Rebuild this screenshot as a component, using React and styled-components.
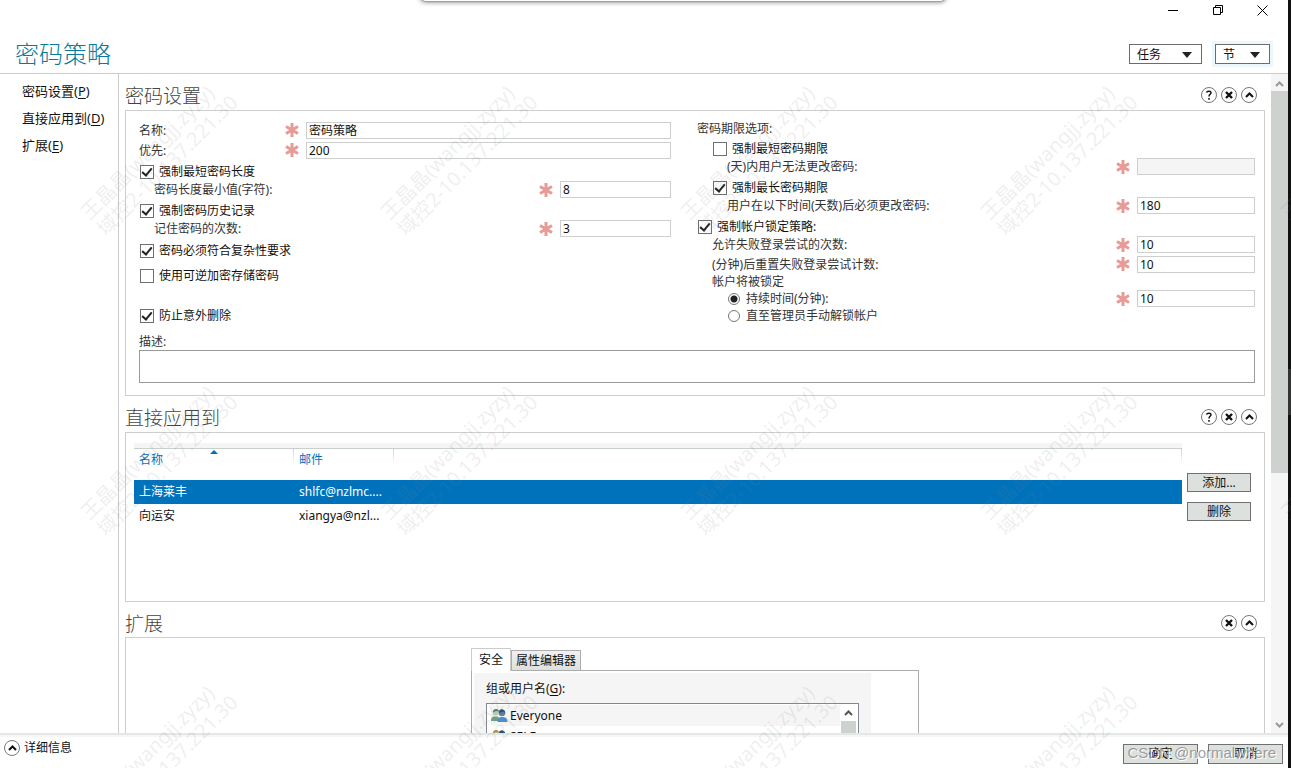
import React, { useState } from "react";
import styled, { createGlobalStyle } from "styled-components";

const watermarks = [];
for (let row = 0; row < 3; row++) {
  for (let col = 0; col < 5; col++) {
    watermarks.push({ left: 159 + col * 300, top: 157 + row * 300 });
  }
}

const members = [
  { name: "上海莱丰", mail: "shlfc@nzlmc...." },
  { name: "向运安", mail: "xiangya@nzl..." },
];

function Star() {
  return (
    <StarIcon viewBox="0 0 14 14" aria-hidden="true">
      <path d="M7 0V14M1 3.5L13 10.5M13 3.5L1 10.5" />
    </StarIcon>
  );
}

function Chevron({ down }) {
  return (
    <svg width="9" height="6" viewBox="0 0 9 6" aria-hidden="true">
      <path
        d={down ? "M1 1L4.500 4.500L8 1" : "M1 5L4.500 1.500L8 5"}
        fill="none"
        stroke="currentColor"
        strokeWidth="2"
      />
    </svg>
  );
}

function Field({ id, label, indent, width, wide, tall, ...rest }) {
  return (
    <Row $h={tall ? 20 : 18} $indent={indent}>
      <Label htmlFor={id} $tall={tall}>
        {label}
      </Label>
      <Star />
      <TextInput id={id} $width={width} $wide={wide} $tall={tall} {...rest} />
    </Row>
  );
}

function Check({ children, checked, indent, tall, gap }) {
  return (
    <CheckRow $indent={indent} $tall={tall} $gap={gap}>
      <Box type="checkbox" defaultChecked={checked} />
      {children}
    </CheckRow>
  );
}

function SectionHead({ title, help }) {
  return (
    <Head $h={help ? 36 : 35}>
      <h2>{title}</h2>
      <Tools>
        {help && (
          <RoundButton aria-label="帮助">
            <svg width="8" height="10" viewBox="0 0 8 10">
              <path
                d="M1.500 2.500C2 .8 6.300 .5 6 3C5.800 4.300 4 4.500 4 6.500M4 8V9.800"
                fill="none"
                stroke="#111"
                strokeWidth="1.500"
              />
            </svg>
          </RoundButton>
        )}
        <RoundButton aria-label="关闭">
          <svg width="8" height="8" viewBox="0 0 8 8">
            <path d="M1 1L7 7M7 1L1 7" stroke="#111" strokeWidth="2.400" />
          </svg>
        </RoundButton>
        <RoundButton aria-label="折叠">
          <Chevron />
        </RoundButton>
      </Tools>
    </Head>
  );
}

function People({ left, right, hair }) {
  return (
    <svg width="17" height="15" viewBox="0 0 17 15" aria-hidden="true">
      <path d="M0 13C0 9 2 8.500 4 8.500H7L10 13Z" fill={left} />
      <circle cx="5" cy="4.500" r="3" fill="#b9c9ae" />
      <path d="M2 4.500C1.500 0 8 0 8 3.500L5 3Z" fill={hair} />
      <path d="M6.500 14C6.500 10 8.500 9 11 9C14 9 16.500 10 16.500 14Z" fill={right} />
      <circle cx="11" cy="5" r="3.200" fill="#5f7f9c" />
      <path d="M8 5C7.500 0 14.500 0 14.300 6L13 3.500Z" fill="#2d5070" />
    </svg>
  );
}

export default function App() {
  const [lock, setLock] = useState("duration");

  return (
    <>
      <GlobalStyle />
      <Screen>
        <Window>
          <Header>
            <h1>密码策略</h1>
            <HeaderRight>
              <Captions>
                <button aria-label="最小化">
                  <svg width="10" height="10" viewBox="0 0 10 10">
                    <path d="M0 5.500H10" />
                  </svg>
                </button>
                <button aria-label="还原">
                  <svg width="10" height="10" viewBox="0 0 10 10">
                    <path d="M.5 2.500H7.500V9.500H.5ZM2.500 2.500V.5H9.500V7.500H7.500" />
                  </svg>
                </button>
                <button aria-label="关闭窗口">
                  <svg width="11" height="11" viewBox="0 0 11 11">
                    <path d="M.5 .5L10.500 10.500M10.500 .5L.5 10.500" />
                  </svg>
                </button>
              </Captions>
              <Menus>
                <MenuButton $width={73}>
                  任务 <Arrow />
                </MenuButton>
                <MenuButton $width={55} $focus>
                  节 <Arrow />
                </MenuButton>
              </Menus>
            </HeaderRight>
          </Header>

          <Body>
            <Nav>
              <a href="#settings">
                密码设置(<u>P</u>)
              </a>
              <a href="#applies">
                直接应用到(<u>D</u>)
              </a>
              <a href="#extensions">
                扩展(<u>E</u>)
              </a>
            </Nav>

            <Content>
              <section id="settings">
                <SectionHead title="密码设置" help />
                <Panel>
                  <Form>
                    <Columns>
                      <Column $grow={532}>
                        <Field id="name" label="名称:" tall wide defaultValue="密码策略" />
                        <Field id="priority" label="优先:" tall wide defaultValue="200" />
                        <Check checked>强制最短密码长度</Check>
                        <Field id="minLength" label="密码长度最小值(字符):" indent={15} width={111} defaultValue="8" />
                        <Check checked>强制密码历史记录</Check>
                        <Field id="history" label="记住密码的次数:" indent={15} width={111} defaultValue="3" />
                        <Check checked tall>密码必须符合复杂性要求</Check>
                        <Check tall>使用可逆加密存储密码</Check>
                        <Check checked tall gap={15}>防止意外删除</Check>
                      </Column>
                      <Column $grow={558}>
                        <Row $h={17}>密码期限选项:</Row>
                        <Check indent={15}>强制最短密码期限</Check>
                        <Field id="minAge" label="(天)内用户无法更改密码:" indent={30} width={118} disabled />
                        <Check checked indent={15}>强制最长密码期限</Check>
                        <Field id="maxAge" label="用户在以下时间(天数)后必须更改密码:" indent={30} width={118} defaultValue="180" />
                        <Check checked>强制帐户锁定策略:</Check>
                        <Field id="attempts" label="允许失败登录尝试的次数:" indent={15} width={118} defaultValue="10" />
                        <Field id="reset" label="(分钟)后重置失败登录尝试计数:" tall indent={15} width={118} defaultValue="10" />
                        <Row $h={16} $indent={15}>帐户将被锁定</Row>
                        <Row $h={18} $indent={31}>
                          <RadioLabel>
                            <Radio
                              type="radio"
                              name="lock"
                              checked={lock === "duration"}
                              onChange={() => setLock("duration")}
                            />
                            持续时间(分钟):
                          </RadioLabel>
                          <Star />
                          <TextInput aria-label="持续时间" $width={118} defaultValue="10" />
                        </Row>
                        <Row $h={16} $indent={31}>
                          <RadioLabel>
                            <Radio
                              type="radio"
                              name="lock"
                              checked={lock === "manual"}
                              onChange={() => setLock("manual")}
                            />
                            直至管理员手动解锁帐户
                          </RadioLabel>
                        </Row>
                      </Column>
                    </Columns>
                    <DescLabel htmlFor="desc">描述:</DescLabel>
                    <Description id="desc" />
                  </Form>
                </Panel>
              </section>

              <section id="applies">
                <SectionHead title="直接应用到" help />
                <Panel>
                  <ListArea>
                    <Table>
                      <thead>
                        <tr>
                          <th>
                            名称 <SortMark />
                          </th>
                          <th>邮件</th>
                          <th aria-label="空列" />
                        </tr>
                      </thead>
                      <tbody>
                        {members.map((m, i) => (
                          <MemberRow key={m.name} $selected={i === 0}>
                            <td>{m.name}</td>
                            <td>{m.mail}</td>
                            <td />
                          </MemberRow>
                        ))}
                      </tbody>
                    </Table>
                    <SideButtons>
                      <Button $width={64} $height={19}>添加...</Button>
                      <Button $width={64} $height={19}>删除</Button>
                    </SideButtons>
                  </ListArea>
                </Panel>
              </section>

              <section id="extensions">
                <SectionHead title="扩展" />
                <Panel>
                  <TabControl>
                    <TabStrip>
                      <Tab $active>安全</Tab>
                      <Tab>属性编辑器</Tab>
                    </TabStrip>
                    <TabPage>
                      <Security>
                        <span>
                          组或用户名(<u>G</u>):
                        </span>
                        <GroupBox>
                          <GroupList>
                            <li>
                              <People left="#6d9f86" right="#4d8fc6" hair="#4f7f6a" />
                              Everyone
                            </li>
                            <li>
                              <People left="#c9a04a" right="#7a5a4a" hair="#b58a35" />
                              SELF
                            </li>
                          </GroupList>
                          <MiniScroll>
                            <Chevron />
                            <i />
                          </MiniScroll>
                        </GroupBox>
                      </Security>
                    </TabPage>
                  </TabControl>
                </Panel>
              </section>
            </Content>

            <ScrollBar>
              <Chevron />
              <Thumb />
              <Chevron down />
            </ScrollBar>
          </Body>

          <Footer>
            <Details>
              <RoundButton as="span">
                <Chevron />
              </RoundButton>
              详细信息
            </Details>
            <FooterButtons>
              <Button $width={75} $height={20}>确定</Button>
              <Button $width={75} $height={20}>取消</Button>
            </FooterButtons>
            <Credit>CSDN @normalwhere</Credit>
          </Footer>
        </Window>
        <Edge />
        <TopShadow />
        {watermarks.map((w) => (
          <Watermark key={`${w.left}-${w.top}`} style={w}>
            王晶晶(wangjj.zyzy)
            <br />
            域控2-10.137.221.30
          </Watermark>
        ))}
      </Screen>
    </>
  );
}

const GlobalStyle = createGlobalStyle`
  * {
    box-sizing: border-box;
  }

  body {
    margin: 0;
    background: #ffffff;
    color: #111111;
    font: 12px/16px "Noto Sans", "Noto Sans CJK SC", sans-serif;
  }

  h1, h2 {
    margin: 0;
    font-weight: 300;
  }

  button, input, textarea {
    padding: 0;
    border: none;
    background: none;
    color: inherit;
    font: inherit;
  }

  u {
    text-underline-offset: 2px;
  }
`;

const Screen = styled.div`
  position: relative;
  display: flex;
  height: 100vh;
  overflow: hidden;
`;

const Window = styled.main`
  flex: 1;
  min-width: 0;
  display: flex;
  flex-direction: column;
`;

/* edge of the neighbouring screen */
const Edge = styled.div`
  width: 3px;
  background: linear-gradient(#111111 369px, #333333 369px, #333333 415px, #111111 415px);
`;

const TopShadow = styled.div`
  position: absolute;
  top: -20px;
  left: 420px;
  right: 345px;
  height: 22px;
  border-radius: 6px;
  border-bottom: 1px solid #9ba19e;
  background: #ffffff;
  box-shadow: 0 0 5px #777777;
`;

const Header = styled.header`
  display: flex;
  justify-content: space-between;
  height: 74px;
  padding-left: 15px;
  border-bottom: 1px solid #cccccc;

  h1 {
    padding-top: 38px;
    color: #0a7a9c;
    font-size: 24px;
    line-height: 32px;
  }
`;

const HeaderRight = styled.div`
  display: flex;
  flex-direction: column;
  align-items: flex-end;
`;

const Captions = styled.div`
  display: flex;
  padding-right: 3px;

  button {
    display: flex;
    align-items: center;
    justify-content: center;
    width: 45px;
    height: 20px;
  }

  svg {
    fill: none;
    stroke: #000000;
  }
`;

const Menus = styled.div`
  display: flex;
  gap: 13px;
  padding: 24px 18px 0 0;
`;

const MenuButton = styled.button`
  display: flex;
  align-items: center;
  justify-content: space-between;
  width: ${(p) => p.$width}px;
  height: 20px;
  padding: 1px 9px 0 7px;
  border: 1px solid #6a6d6b;
  background: #ffffff;
  box-shadow: ${(p) => (p.$focus ? "0 0 0 3px #ebf6fd" : "none")};
`;

const Arrow = styled.span`
  border: 5px solid transparent;
  border-top: 6px solid #222222;
  border-bottom: none;
`;

const Body = styled.div`
  flex: 1;
  min-height: 0;
  display: flex;
`;

const Nav = styled.nav`
  display: flex;
  flex-direction: column;
  gap: 9px;
  width: 119px;
  padding: 8px 0 0 22px;
  border-right: 1px solid #cccccc;

  a {
    color: #111111;
    font-size: 13px;
    line-height: 18px;
    text-decoration: none;
    white-space: nowrap;
  }
`;

const Content = styled.div`
  flex: 1;
  min-width: 0;
  overflow: hidden;
  padding: 0 6px;
`;

const Head = styled.div`
  display: flex;
  align-items: center;
  justify-content: space-between;
  height: ${(p) => p.$h}px;
  padding: 6px 8px 0 0;

  h2 {
    padding-top: 2px;
    color: #444444;
    font-size: 19px;
    line-height: 24px;
  }
`;

const Tools = styled.div`
  display: flex;
  gap: 4px;
`;

const RoundButton = styled.button`
  display: flex;
  align-items: center;
  justify-content: center;
  width: 16px;
  height: 16px;
  border: 1px solid #777777;
  border-radius: 50%;
  background: #ffffff;
`;

const Panel = styled.div`
  border: 1px solid #cccfcd;
`;

const Form = styled.form`
  display: flex;
  flex-direction: column;
  padding: 9px 9px 12px 13px;
`;

const Columns = styled.div`
  display: flex;
  gap: 26px;
`;

const Column = styled.div`
  flex: ${(p) => p.$grow} 1 0;
  min-width: 0;
`;

const Row = styled.div`
  display: flex;
  align-items: center;
  height: ${(p) => p.$h}px;
  padding-left: ${(p) => p.$indent || 0}px;
  color: #333333;
`;

const Label = styled.label`
  flex: 1;
  padding-top: ${(p) => (p.$tall ? 2 : 0)}px;
  white-space: nowrap;
`;

const StarIcon = styled.svg`
  width: 14px;
  height: 14px;
  margin-right: 7px;
  stroke: #e89a96;
  stroke-width: 3;
`;

const TextInput = styled.input`
  align-self: ${(p) => (p.$tall ? "center" : "flex-start")};
  width: ${(p) => (p.$wide ? "365px" : `${p.$width}px`)};
  height: 17px;
  padding: 0 2px;
  border: 1px solid #cccfcd;
  background: #ffffff;
  color: #111111;

  &:disabled {
    background: #f5f5f5;
  }
`;

const CheckRow = styled.label`
  display: flex;
  align-items: center;
  height: ${(p) => (p.$tall ? 25 : 21)}px;
  margin-top: ${(p) => p.$gap || 0}px;
  padding: ${(p) => (p.$tall ? 0 : 2)}px 0 0 ${(p) => (p.$indent || 0) + 1}px;
`;

const Box = styled.input`
  appearance: none;
  width: 14px;
  height: 14px;
  margin: 0 5px 0 0;
  border: 1px solid #6f6f6f;
  background: #ffffff;

  &:checked::before {
    content: "";
    box-sizing: border-box;
    display: block;
    width: 6px;
    height: 10px;
    margin: 0 0 0 3px;
    border: solid #222222;
    border-width: 0 2px 2px 0;
    transform: rotate(40deg);
  }
`;

const RadioLabel = styled.label`
  flex: 1;
  display: flex;
  align-items: center;
`;

const Radio = styled.input`
  appearance: none;
  width: 12px;
  height: 12px;
  margin: 0 6px 0 0;
  border: 1px solid #777777;
  border-radius: 50%;

  &:checked {
    background: radial-gradient(#222222 3px, #ffffff 4px);
  }
`;

const DescLabel = styled.label`
  margin-top: 4px;
  padding-top: 1px;
  color: #333333;
  line-height: 17px;
`;

const Description = styled.textarea`
  height: 33px;
  border: 1px solid #999999;
  resize: none;
`;

const ListArea = styled.div`
  display: flex;
  align-items: flex-start;
  gap: 5px;
  height: 168px;
  padding: 10px 13px 0 8px;
`;

const Table = styled.table`
  flex: 1;
  border-collapse: collapse;
  table-layout: fixed;
  width: 100%;

  th {
    height: 37px;
    padding: 0 5px 4px;
    color: #0072bc;
    font-weight: 400;
    text-align: left;
    background:
      linear-gradient(#c9cfcc, #ffffff) right 5px / 1px 16px no-repeat,
      linear-gradient(#f5f5f5 5px, #c9cfcc 5px, #c9cfcc 6px, #ffffff 6px);
  }

  th:nth-child(1) {
    width: 160px;
  }

  th:nth-child(2) {
    width: 100px;
  }

  td {
    height: 24px;
    padding: 0 5px;
    white-space: nowrap;
  }
`;

const MemberRow = styled.tr`
  background: ${(p) => (p.$selected ? "#0072bc" : "#ffffff")};
  color: ${(p) => (p.$selected ? "#ffffff" : "#111111")};
`;

const SortMark = styled.span`
  float: right;
  margin: -2px 71px 0 0;
  border: 4px solid transparent;
  border-top: none;
  border-bottom-color: #0072bc;
`;

const SideButtons = styled.div`
  display: flex;
  flex-direction: column;
  gap: 10px;
  padding-top: 30px;
`;

const Button = styled.button`
  width: ${(p) => p.$width}px;
  height: ${(p) => p.$height}px;
  border: 1px solid #707070;
  background: #dde1de;
`;

const TabControl = styled.div`
  width: 448px;
  margin: 10px auto 0;
`;

const TabStrip = styled.div`
  display: flex;
  align-items: flex-end;
`;

const Tab = styled.button`
  height: ${(p) => (p.$active ? 23 : 20)}px;
  margin-bottom: ${(p) => (p.$active ? -1 : 0)}px;
  padding: 0 ${(p) => (p.$active ? 7 : 4)}px;
  border: 1px solid ${(p) => (p.$active ? "#cccccc" : "#acacac")};
  border-bottom: none;
  background: ${(p) => (p.$active ? "#ffffff" : "linear-gradient(#f0f0f0, #dde1de)")};
  z-index: ${(p) => (p.$active ? 1 : 0)};
`;

const TabPage = styled.div`
  height: 300px;
  padding: 2px;
  border: 1px solid #acacac;
`;

const Security = styled.div`
  width: 397px;
  height: 290px;
  padding: 8px 12px;
  background: #f5f5f5;

  > span {
    display: block;
    line-height: 16px;
  }
`;

const GroupBox = styled.div`
  display: flex;
  height: 110px;
  margin-top: 6px;
  border: 1px solid #828790;
  background: #ffffff;
`;

const GroupList = styled.ul`
  flex: 1;
  margin: 0;
  padding: 1px 0 0 4px;
  list-style: none;

  li {
    display: flex;
    align-items: center;
    gap: 2px;
    height: 21px;
  }

  li:first-child {
    background: #f5f5f5;
  }
`;

const MiniScroll = styled.div`
  display: flex;
  flex-direction: column;
  align-items: center;
  width: 18px;
  padding: 6px 1px 0 0;
  color: #555555;

  i {
    width: 15px;
    height: 60px;
    margin-top: 5px;
    background: #cdd2cf;
  }
`;

const ScrollBar = styled.div`
  display: flex;
  flex-direction: column;
  align-items: center;
  width: 17px;
  padding: 7px 0 5px;
  background: #f5f5f5;
  color: #999999;

  svg:last-child {
    margin-top: auto;
  }
`;

const Thumb = styled.div`
  width: 17px;
  height: 59%;
  margin-top: 4px;
  background: #cdd2cf;
`;

const Footer = styled.footer`
  position: relative;
  display: flex;
  justify-content: space-between;
  height: 35px;
  padding: 0 5px 0 4px;
  border-top: 2px solid #e3e7e5;
  box-shadow: inset 0 2px #f5f7f6;
`;

const Details = styled.button`
  display: flex;
  align-items: center;
  gap: 4px;
  height: 26px;
`;

const FooterButtons = styled.div`
  display: flex;
  gap: 10px;
  padding-top: 9px;
`;

const Credit = styled.span`
  position: absolute;
  right: 12px;
  bottom: 6px;
  color: rgba(120, 120, 120, 0.7);
  font: 15px/18px "Liberation Sans", Arial, sans-serif;
  text-shadow: 1px 1px #ffffff;
  pointer-events: none;
`;

const Watermark = styled.div`
  position: absolute;
  color: rgba(128, 128, 128, 0.14);
  font-size: 20px;
  line-height: 23px;
  white-space: nowrap;
  transform: translate(-50%, -50%) rotate(-45deg);
  pointer-events: none;
`;
